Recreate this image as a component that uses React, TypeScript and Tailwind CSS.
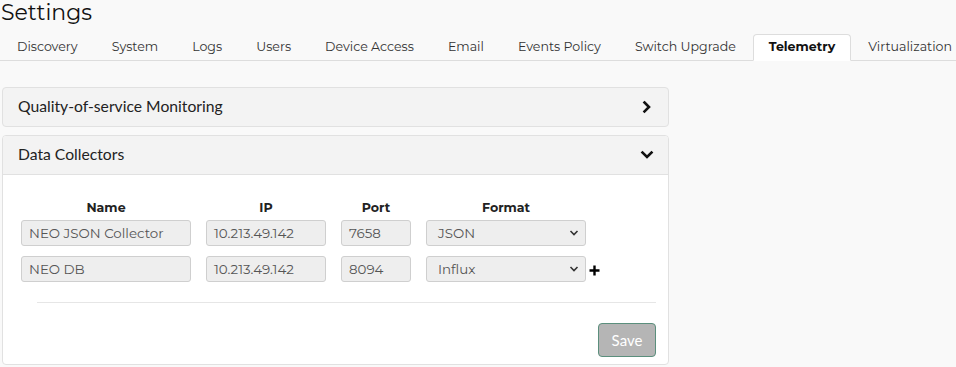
const tabs = [
  "Discovery",
  "System",
  "Logs",
  "Users",
  "Device Access",
  "Email",
  "Events Policy",
  "Switch Upgrade",
  "Telemetry",
  "Virtualization",
];

const collectors = [
  { name: "NEO JSON Collector", ip: "10.213.49.142", port: "7658", format: "JSON" },
  { name: "NEO DB", ip: "10.213.49.142", port: "8094", format: "Influx" },
];

function Chevron({ down }: { down?: boolean }) {
  return (
    <svg width="14" height="14" viewBox="0 0 14 14" className={down ? "rotate-90" : ""}>
      <path d="M4.5 2.5 L9 7 L4.5 11.5" fill="none" stroke="#111" strokeWidth="2.6" strokeLinecap="square" />
    </svg>
  );
}

function Field({ value, width }: { value: string; width: string }) {
  return (
    <div
      className={`${width} h-[26px] flex items-center px-[7px] bg-[#eeeeee] border border-[#cfcfcf] rounded-[3px] text-[13.4px] text-[#555] whitespace-nowrap overflow-hidden`}
    >
      {value}
    </div>
  );
}

function Select({ value }: { value: string }) {
  return (
    <div className="w-[160px] h-[26px] flex items-center justify-between pl-[11px] pr-[6px] bg-[#eeeeee] border border-[#cfcfcf] rounded-[3px] text-[13.4px] text-[#555]">
      <span>{value}</span>
      <svg width="10" height="8" viewBox="0 0 10 8">
        <path d="M1.5 2 L5 5.5 L8.5 2" fill="none" stroke="#333" strokeWidth="1.6" />
      </svg>
    </div>
  );
}

export default function App() {
  return (
    <div className="w-[956px] h-[367px] bg-[#f9f9f9] overflow-hidden font-['Montserrat','Noto_Sans',sans-serif] text-[#222]">
      <h1 className="text-[22px] leading-[26px] text-[#111] pl-[1px]">Settings</h1>

      <div className="mt-[8px] flex border-b border-[#dddddd] h-[27px]">
        {tabs.map((t) => (
          <div
            key={t}
            className={
              t === "Telemetry"
                ? "px-[15px] h-[27px] flex items-center bg-white border border-[#dddddd] border-b-white rounded-t-[4px] text-[12.6px] font-bold text-[#111] mb-[-1px]"
                : "px-[17px] h-[27px] flex items-center text-[12.6px] text-[#333] whitespace-nowrap"
            }
          >
            {t}
          </div>
        ))}
      </div>

      <div className="mt-[26px] ml-[2px] w-[667px] flex flex-col gap-[8px] font-['Lato',sans-serif]">
        <div className="h-[40px] flex items-center justify-between pl-[15px] pr-[14px] bg-[#f3f3f3] border border-[#e1e1e1] rounded-[4px]">
          <span className="text-[15.7px] text-[#222]">Quality-of-service Monitoring</span>
          <Chevron />
        </div>

        <div className="border border-[#e1e1e1] rounded-[4px] bg-white overflow-hidden">
          <div className="h-[39px] flex items-center justify-between pl-[15px] pr-[14px] bg-[#f3f3f3] border-b border-[#e1e1e1]">
            <span className="text-[15.7px] text-[#222]">Data Collectors</span>
            <Chevron down />
          </div>

          <div className="pt-[24px] pl-[18px] pr-[12px] pb-[7px] font-['Montserrat','Noto_Sans',sans-serif]">
            <div className="flex gap-[15px] text-[12.6px] font-bold text-[#222] h-[18px] items-center">
              <div className="w-[170px] text-center">Name</div>
              <div className="w-[120px] text-center">IP</div>
              <div className="w-[70px] text-center">Port</div>
              <div className="w-[160px] text-center">Format</div>
            </div>
            <div className="mt-[3px] flex flex-col gap-[10px]">
              {collectors.map((c, i) => (
                <div key={c.name} className="flex items-center gap-[15px]">
                  <Field value={c.name} width="w-[170px]" />
                  <Field value={c.ip} width="w-[120px]" />
                  <Field value={c.port} width="w-[70px]" />
                  <div className="flex items-center gap-[2px]">
                    <Select value={c.format} />
                    {i === collectors.length - 1 && (
                      <svg width="11" height="11" viewBox="0 0 11 11" className="ml-[1px] mt-[2px]">
                        <path d="M5.5 0.5 V10.5 M0.5 5.5 H10.5" stroke="#000" strokeWidth="2.4" />
                      </svg>
                    )}
                  </div>
                </div>
              ))}
            </div>
            <div className="mt-[20px] ml-[16px] border-t border-[#e6e6e6]" />
            <div className="mt-[20px] flex justify-end">
              <button className="w-[58px] h-[34px] bg-[#b5b5b5] border border-[#5b8f7d] rounded-[4px] text-white text-[15px] font-['Lato',sans-serif]">
                Save
              </button>
            </div>
          </div>
        </div>
      </div>
    </div>
  );
}
